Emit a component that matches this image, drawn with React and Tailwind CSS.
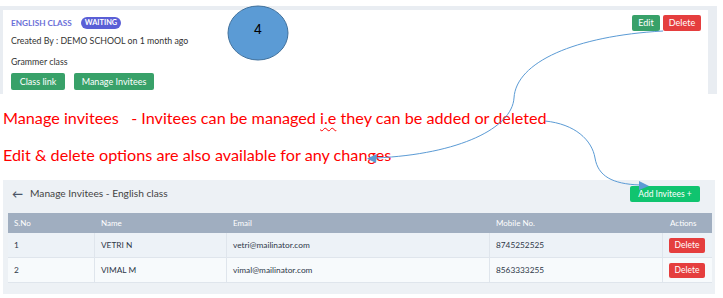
import React from "react";

const ui = { fontFamily: "Lato, 'Open Sans', sans-serif" };
const calibri = { fontFamily: "Lato, 'Open Sans', sans-serif" };

function Row({ n, name, email, mobile, bg }) {
  return (
    <div className={`grid grid-cols-[87px_132px_263px_173px_49px] h-[25px] ${bg} border-b border-[#dfe5ec] text-[8.3px] text-[#2d3748]`}>
      <div className="flex items-center pl-[6px] border-r border-[#dfe5ec]">{n}</div>
      <div className="flex items-center pl-[6px] border-r border-[#dfe5ec]">{name}</div>
      <div className="flex items-center pl-[6px] border-r border-[#dfe5ec]">{email}</div>
      <div className="flex items-center pl-[6px] border-r border-[#dfe5ec]">{mobile}</div>
      <div className="flex items-center pl-[6px]">
        <span className="h-[15px] w-[36px] rounded-[2px] bg-[#e53e3e] text-white text-[8.5px] flex items-center justify-center">Delete</span>
      </div>
    </div>
  );
}

export default function App() {
  return (
    <div className="relative w-[723px] h-[298px] bg-white overflow-hidden" style={ui}>
      {/* top panel */}
      <div className="mt-[6px] w-[717px] h-[88px] bg-[#e9edf2] pl-[3px] pr-[9px] pt-[4px]">
        <div className="h-full bg-white flex justify-between pl-[8px] pr-[7px]">
          <div className="flex flex-col">
            <div className="mt-[7px] h-[12px] flex items-center gap-[9px]">
              <span className="text-[8.2px] font-bold text-[#6b6fd8]">ENGLISH CLASS</span>
              <span className="h-[12px] px-[4px] rounded-full bg-[#5a5fd6] text-white text-[7.4px] font-bold flex items-center">WAITING</span>
            </div>
            <div className="mt-[6px] h-[12px] flex items-center text-[8.8px] text-[#333]">Created By : DEMO SCHOOL on 1 month ago</div>
            <div className="mt-[9px] h-[12px] flex items-center text-[8.8px] text-[#333]">Grammer class</div>
            <div className="mt-[5px] flex gap-[9px]">
              <span className="h-[17px] w-[54px] rounded-[2px] bg-[#38a169] text-white text-[9px] flex items-center justify-center">Class link</span>
              <span className="h-[17px] w-[80px] rounded-[2px] bg-[#38a169] text-white text-[9px] flex items-center justify-center">Manage Invitees</span>
            </div>
          </div>
          <div className="mt-[5px] flex gap-[3px]">
            <span className="h-[16px] w-[28px] rounded-[2px] bg-[#38a169] text-white text-[9px] flex items-center justify-center">Edit</span>
            <span className="h-[16px] w-[38px] rounded-[2px] bg-[#e53e3e] text-white text-[9px] flex items-center justify-center">Delete</span>
          </div>
        </div>
      </div>

      {/* red notes */}
      <div className="pl-[3px] text-[#ff0000] text-[16.2px] leading-[20px]" style={calibri}>
        <div className="mt-[14px] whitespace-pre">
          Manage invitees   - Invitees can be managed{" "}
          <span className="underline decoration-wavy decoration-[#ff0000] underline-offset-[3px] decoration-[1px]">i.e</span>{" "}
          they can be added or deleted
        </div>
        <div className="mt-[17px]">Edit &amp; delete options are also available for any changes</div>
      </div>

      {/* bottom panel */}
      <div className="absolute left-[3px] top-[180px] w-[712px] h-[114px] bg-[#edf1f5]">
        <div className="flex justify-between items-center pt-[4px] pl-[9px] pr-[15px] h-[20px] box-content">
          <div className="flex items-center gap-[7px] text-[#4a5568]">
            <span className="text-[11px] leading-none font-bold">←</span>
            <span className="text-[10.2px] text-[#444]">Manage Invitees - English class</span>
          </div>
          <span className="h-[16px] w-[70px] rounded-[2px] bg-[#10c46f] text-white text-[8.5px] flex items-center justify-center">Add Invitees +</span>
        </div>
        <div className="ml-[5px] mt-[9px] w-[704px]">
          <div className="grid grid-cols-[87px_132px_263px_173px_49px] h-[20px] bg-[#a0aec0] text-white text-[8px]">
            <div className="flex items-center pl-[6px]">S.No</div>
            <div className="flex items-center pl-[6px]">Name</div>
            <div className="flex items-center pl-[6px]">Email</div>
            <div className="flex items-center pl-[6px]">Mobile No.</div>
            <div className="flex items-center pl-[7px]">Actions</div>
          </div>
          <Row n="1" name="VETRI N" email="vetri@mailinator.com" mobile="8745252525" bg="bg-[#edf2f7]" />
          <Row n="2" name="VIMAL M" email="vimal@mailinator.com" mobile="8563333255" bg="bg-[#f7fafc]" />
        </div>
      </div>

      {/* annotations */}
      <svg className="absolute left-0 top-0 pointer-events-none" width="723" height="298" viewBox="0 0 723 298">
        <ellipse cx="258" cy="33" rx="30" ry="27" fill="#5b9bd5" stroke="#41719c" strokeWidth="1" />
        <text x="258" y="34" textAnchor="middle" fontFamily="'Liberation Sans', Arial, sans-serif" fontSize="14" fill="#000">4</text>
        <path d="M663 31 C 575 36, 516 62, 514 98 C 512 128, 460 154, 376 158" fill="none" stroke="#5b9bd5" strokeWidth="1" />
        <path d="M367 158.5 L377 154 L376 163 Z" fill="#5b9bd5" />
        <path d="M545 121 C 575 124, 592 140, 595 158 C 598 176, 612 184, 640 185" fill="none" stroke="#5b9bd5" strokeWidth="1" />
        <path d="M649 186 L639 181 L639 190 Z" fill="#5b9bd5" />
      </svg>
    </div>
  );
}
